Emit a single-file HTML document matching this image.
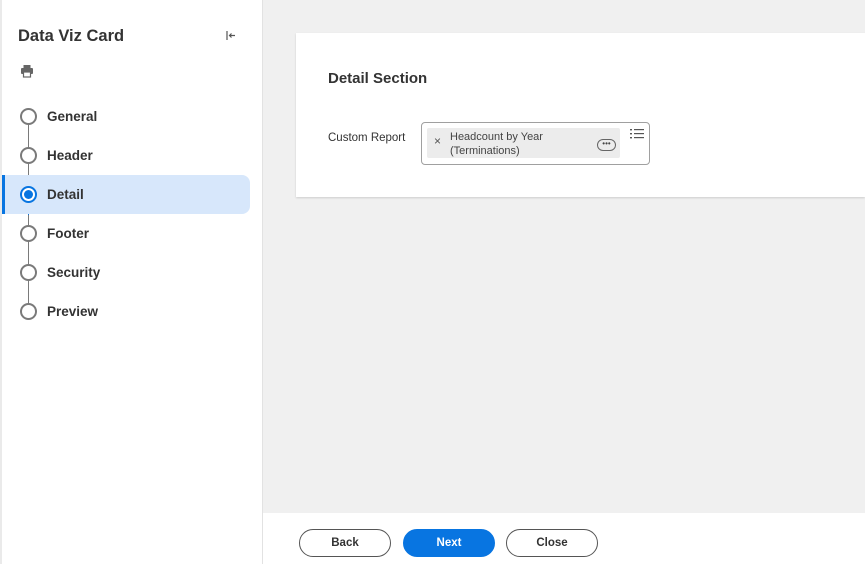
<!DOCTYPE html>
<html><head><meta charset="utf-8"><style>
*{box-sizing:border-box;margin:0;padding:0}
body{width:865px;height:564px;overflow:hidden;font-family:"Liberation Sans",Arial,sans-serif;background:#f0f0f0;position:relative;color:#333}
.side{position:absolute;left:0;top:0;width:263px;height:564px;background:#fff;border-right:1px solid #e2e2e2;border-left:2px solid #eaeaea}
.title{position:absolute;left:16px;top:27px;font-size:16.5px;font-weight:bold;color:#333}
.coll{position:absolute;left:222px;top:29px}
.print{position:absolute;left:18px;top:64px}
.line{position:absolute;left:26px;top:117px;width:1px;height:195px;background:#7a7a7a}
.line2{position:absolute;left:26px;top:175px;width:1px;height:40px;background:#0875e1}
.step{position:absolute;left:0;width:248px;height:39px;font-size:13.5px;font-weight:bold;color:#333}
.step span{position:absolute;left:45px;top:12px}
.step i{position:absolute;left:18px;top:11px;width:17px;height:17px;border-radius:50%;border:2px solid #7a7a7a;background:#fff}
.act{background:#d7e7fb;border-radius:0 8px 8px 0}
.act:before{content:"";position:absolute;left:0;top:0;width:3px;height:39px;background:#0875e1}
.act i{border-color:#0875e1}
.act i:after{content:"";position:absolute;left:2px;top:2px;width:9px;height:9px;border-radius:50%;background:#0875e1}
.card{position:absolute;left:296px;top:33px;width:569px;height:164px;background:#fff;box-shadow:0 1px 2px rgba(0,0,0,.15)}
.h{position:absolute;left:32px;top:37px;font-size:15px;font-weight:bold;color:#333}
.lbl{position:absolute;left:32px;top:99px;font-size:11.5px;color:#333}
.field{position:absolute;left:125px;top:89px;width:229px;height:43px;border:1px solid #a0a0a0;border-radius:4px}
.chip{position:absolute;left:5px;top:5px;width:193px;height:30px;background:#ececec;border-radius:2px;font-size:11px;color:#444}
.chip .x{position:absolute;left:7px;top:6px;font-size:12px;color:#555}
.chip .t{position:absolute;left:23px;top:2px;line-height:14px}
.dots{position:absolute;left:170px;top:11px;width:19px;height:12px;border:1px solid #666;border-radius:6px;font-size:8px;text-align:center;line-height:7px;color:#444}
.menu{position:absolute;left:208px;top:5px}
.foot{position:absolute;left:263px;top:513px;width:602px;height:51px;background:#fff}
.btn{position:absolute;top:16px;width:92px;height:28px;border-radius:14px;border:1px solid #555;background:#fff;font-size:11.5px;font-weight:bold;color:#333;text-align:center;line-height:26px}
.next{background:#0875e1;border-color:#0875e1;color:#fff}
</style></head><body>
<div class="side">
<div class="title">Data Viz Card</div>
<svg class="coll" width="14" height="14" viewBox="0 0 14 14"><path d="M3 2v9M11 6.5H5.5M7.5 4.5l-2 2 2 2" stroke="#555" stroke-width="1.2" fill="none"/></svg>
<svg class="print" width="14" height="14" viewBox="0 0 14 14"><rect x="3.5" y="1" width="7" height="3" fill="#666"/><rect x="1" y="4" width="12" height="6" rx="1" fill="#666"/><rect x="3.5" y="8" width="7" height="5" fill="#fff" stroke="#666" stroke-width="1.2"/></svg>
<div class="line"></div><div class="line2"></div>
<div class="step" style="top:97px"><i></i><span>General</span></div>
<div class="step" style="top:136px"><i></i><span>Header</span></div>
<div class="step act" style="top:175px"><i></i><span>Detail</span></div>
<div class="step" style="top:214px"><i></i><span>Footer</span></div>
<div class="step" style="top:253px"><i></i><span>Security</span></div>
<div class="step" style="top:292px"><i></i><span>Preview</span></div>
</div>
<div class="card">
<div class="h">Detail Section</div>
<div class="lbl">Custom Report</div>
<div class="field">
<div class="chip"><span class="x">×</span><div class="t">Headcount by Year<br>(Terminations)</div><div class="dots">•••</div></div>
<svg class="menu" width="14" height="12" viewBox="0 0 14 12"><g fill="#555"><rect x="0" y="1" width="2" height="1.4"/><rect x="0" y="5" width="2" height="1.4"/><rect x="0" y="9" width="2" height="1.4"/><rect x="4" y="1" width="10" height="1.2"/><rect x="4" y="5" width="10" height="1.2"/><rect x="4" y="9" width="10" height="1.2"/></g></svg>
</div>
</div>
<div class="foot">
<div class="btn" style="left:36px">Back</div>
<div class="btn next" style="left:140px">Next</div>
<div class="btn" style="left:243px">Close</div>
</div>
</body></html>
